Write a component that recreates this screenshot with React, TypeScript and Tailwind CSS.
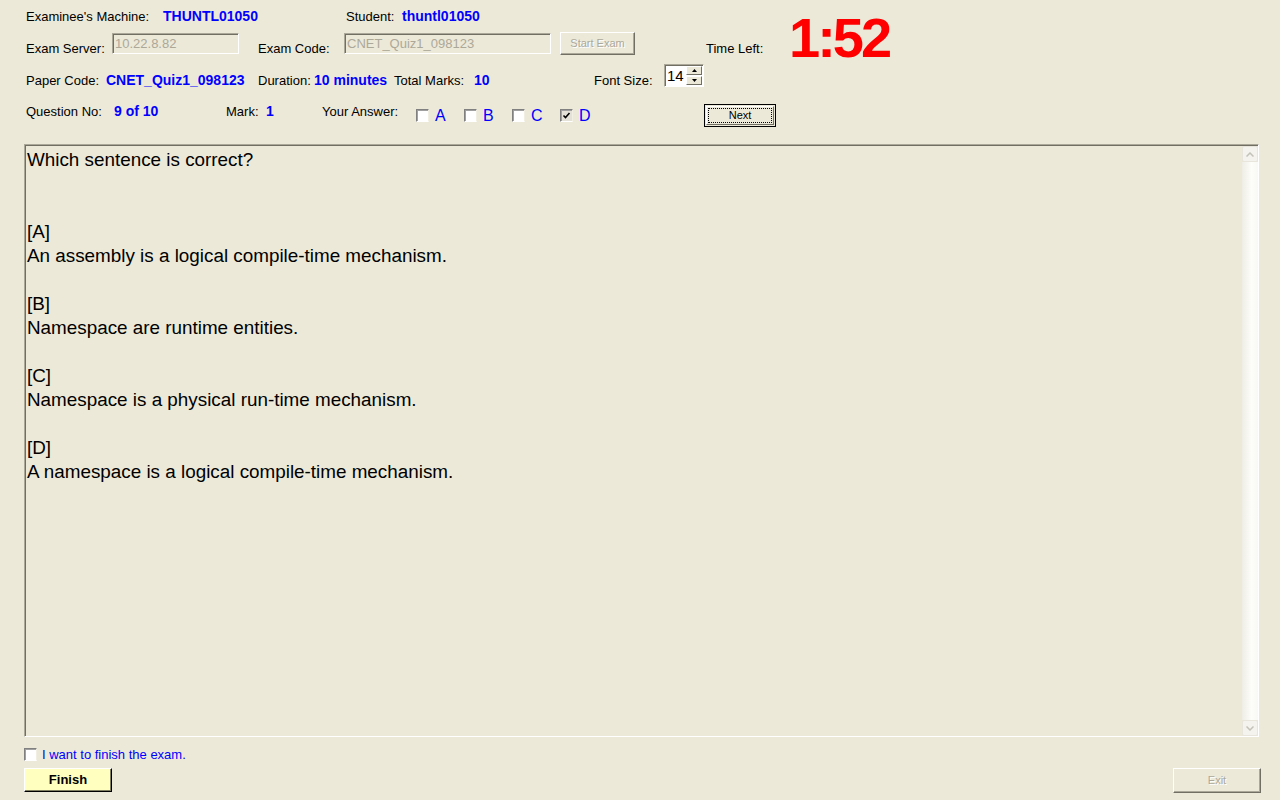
import React from "react";

function Label({ children, className = "" }: { children: React.ReactNode; className?: string }) {
  return <span className={`text-[13px] leading-[15px] text-black ${className}`}>{children}</span>;
}

function Value({ children, className = "" }: { children: React.ReactNode; className?: string }) {
  return <span className={`text-[14px] font-bold leading-[15px] text-[#0000ff] ${className}`}>{children}</span>;
}

function Field({ value, width }: { value: string; width: string }) {
  return (
    <div
      className={`${width} h-[21px] border border-t-[#aca899] border-l-[#aca899] border-b-white border-r-white shadow-[inset_1px_1px_0_#716f64] px-[2px] pt-[2px] text-[13px] leading-[15px] text-[#aca899]`}
    >
      {value}
    </div>
  );
}

function Check({ checked = false }: { checked?: boolean }) {
  return (
    <span
      className={`flex h-[13px] w-[13px] shrink-0 items-center justify-center border border-t-[#808080] border-l-[#808080] border-b-white border-r-[#f1efe2] shadow-[inset_1px_1px_0_#a0a0a0] ${
        checked ? "bg-[#e4e2d8]" : "bg-white"
      }`}
    >
      {checked && (
        <svg width="9" height="9" viewBox="0 0 9 9">
          <path d="M1.5 4.5 L3.5 6.5 L7.5 2" fill="none" stroke="#000" strokeWidth="1.6" />
        </svg>
      )}
    </span>
  );
}

function Chevron({ up }: { up?: boolean }) {
  return (
    <svg width="8" height="5" viewBox="0 0 8 5">
      <path d={up ? "M0.5 4.5 L4 1 L7.5 4.5" : "M0.5 0.5 L4 4 L7.5 0.5"} fill="none" stroke="#c4c2b8" strokeWidth="1.5" />
    </svg>
  );
}

const lines = [
  "Which sentence is correct?",
  "",
  "",
  "[A]",
  "An assembly is a logical compile-time mechanism.",
  "",
  "[B]",
  "Namespace are runtime entities.",
  "",
  "[C]",
  "Namespace is a physical run-time mechanism.",
  "",
  "[D]",
  "A namespace is a logical compile-time mechanism.",
];

export default function App() {
  const answers = [
    { key: "A", checked: false },
    { key: "B", checked: false },
    { key: "C", checked: false },
    { key: "D", checked: true },
  ];

  return (
    <div className="h-[800px] w-[1280px] overflow-hidden bg-[#ece9d8] pl-[24px] font-['Liberation_Sans',Arial,sans-serif] text-black">
      {/* header: machine, server, timer */}
      <div className="mt-[8px] flex h-[47px]">
        <div className="flex w-[682px] flex-col">
          <div className="flex h-[16px] items-center pl-[2px]">
            <div className="flex w-[320px] items-center">
              <Label className="w-[137px]">Examinee's Machine:</Label>
              <Value>THUNTL01050</Value>
            </div>
            <Label className="w-[56px]">Student:</Label>
            <Value>thuntl01050</Value>
          </div>
          <div className="mt-[8px] flex h-[23px] items-start pl-[2px]">
            <Label className="mt-[9px] w-[86px]">Exam Server:</Label>
            <div className="mt-[1px]">
              <Field value="10.22.8.82" width="w-[127px]" />
            </div>
            <Label className="ml-[19px] mt-[9px] w-[86px]">Exam Code:</Label>
            <div className="mt-[1px]">
              <Field value="CNET_Quiz1_098123" width="w-[207px]" />
            </div>
            <div className="ml-[9px] flex h-[23px] w-[75px] items-center justify-center border border-t-white border-l-white border-b-[#716f64] border-r-[#716f64] shadow-[inset_-1px_-1px_0_#aca899] text-[11px] text-[#aca899] [text-shadow:1px_1px_0_#fff]">
              Start Exam
            </div>
          </div>
        </div>
        <Label className="mb-[-1px] w-[83px] self-end">Time Left:</Label>
        <div className="mt-[10px] h-[40px] self-start text-[56px] font-bold leading-[40px] tracking-[-3px] text-[#ff0000]">
          1:52
        </div>
      </div>

      {/* paper details */}
      <div className="mt-[9px] flex h-[23px] items-end pl-[2px]">
        <div className="mb-[-1px] flex w-[232px] items-end">
          <Label className="w-[80px]">Paper Code:</Label>
          <Value>CNET_Quiz1_098123</Value>
        </div>
        <div className="mb-[-1px] flex w-[136px] items-end">
          <Label className="w-[56px]">Duration:</Label>
          <Value>10 minutes</Value>
        </div>
        <div className="mb-[-1px] flex w-[200px] items-end">
          <Label className="w-[80px]">Total Marks:</Label>
          <Value>10</Value>
        </div>
        <Label className="mb-[-1px] w-[70px]">Font Size:</Label>
        <div className="flex h-[23px] w-[40px] self-start border border-t-[#aca899] border-l-[#aca899] border-b-white border-r-white bg-white shadow-[inset_1px_1px_0_#716f64]">
          <span className="w-[21px] pl-[2px] pt-[2px] text-[15px] leading-[18px]">14</span>
          <div className="mt-[1px] flex w-[16px] flex-col gap-[1px]">
            <div className="flex h-[9px] items-center justify-center border border-t-white border-l-white border-b-[#716f64] border-r-[#716f64] bg-[#ece9d8]">
              <svg width="5" height="3" viewBox="0 0 5 3">
                <path d="M2.5 0 L5 3 L0 3 Z" fill="#000" />
              </svg>
            </div>
            <div className="flex h-[9px] items-center justify-center border border-t-white border-l-white border-b-[#716f64] border-r-[#716f64] bg-[#ece9d8]">
              <svg width="5" height="3" viewBox="0 0 5 3">
                <path d="M0 0 L5 0 L2.5 3 Z" fill="#000" />
              </svg>
            </div>
          </div>
        </div>
      </div>

      {/* question row */}
      <div className="mt-[17px] flex h-[23px] items-start pl-[2px]">
        <div className="flex w-[200px]">
          <Label className="w-[88px]">Question No:</Label>
          <Value>9 of 10</Value>
        </div>
        <div className="flex w-[96px]">
          <Label className="w-[40px]">Mark:</Label>
          <Value>1</Value>
        </div>
        <Label className="w-[94px]">Your Answer:</Label>
        {answers.map((a) => (
          <div key={a.key} className="flex w-[48px] items-start">
            <div className="mt-[5px]">
              <Check checked={a.checked} />
            </div>
            <span className="ml-[6px] mt-[3px] text-[16px] leading-[18px] text-[#0000ff]">{a.key}</span>
          </div>
        ))}
        <div className="ml-[96px] flex h-[23px] w-[72px] items-center justify-center border border-black bg-[#ece9d8] p-[1px]">
          <div className="flex h-full w-full items-center justify-center border border-t-white border-l-white border-b-[#716f64] border-r-[#716f64] p-[1px]">
            <div className="flex h-full w-full items-center justify-center border border-dotted border-black text-[11px] leading-none">
              Next
            </div>
          </div>
        </div>
      </div>

      {/* question text */}
      <div className="mt-[17px] flex h-[593px] w-[1235px] border border-t-[#aca899] border-l-[#aca899] border-b-white border-r-white shadow-[inset_1px_1px_0_#716f64]">
        <div className="flex-1 pl-[2px] pt-[3px] text-[18.85px] leading-[24px]">
          {lines.map((l, i) => (
            <div key={i} className="h-[24px]">
              {l}
            </div>
          ))}
        </div>
        <div className="mt-[1px] flex w-[16px] flex-col">
          <div className="flex h-[16px] items-center justify-center rounded-[2px] border border-[#e8e6dc] bg-[#f4f3ee]">
            <Chevron up />
          </div>
          <div className="flex-1 bg-[linear-gradient(to_right,#eeede5,#fdfdfa_60%,#f8f8f4)]" />
          <div className="flex h-[16px] items-center justify-center rounded-[2px] border border-[#e8e6dc] bg-[#f4f3ee]">
            <Chevron />
          </div>
        </div>
      </div>

      {/* finish */}
      <div className="mt-[10px] flex items-center">
        <Check />
        <span className="ml-[5px] text-[13px] leading-[15px] text-[#0000ff]">I want to finish the exam.</span>
      </div>
      <div className="mt-[6px] flex w-[1237px] items-start justify-between">
        <div className="flex h-[24px] w-[88px] items-center justify-center border border-t-white border-l-white border-b-black border-r-black bg-[#ffffc0] shadow-[inset_-1px_-1px_0_#808060] text-[13px] font-bold">
          Finish
        </div>
        <div className="flex h-[25px] w-[88px] items-center justify-center border border-t-white border-l-white border-b-[#716f64] border-r-[#716f64] shadow-[inset_-1px_-1px_0_#aca899] text-[11px] text-[#aca899] [text-shadow:1px_1px_0_#fff]">
          Exit
        </div>
      </div>
    </div>
  );
}
